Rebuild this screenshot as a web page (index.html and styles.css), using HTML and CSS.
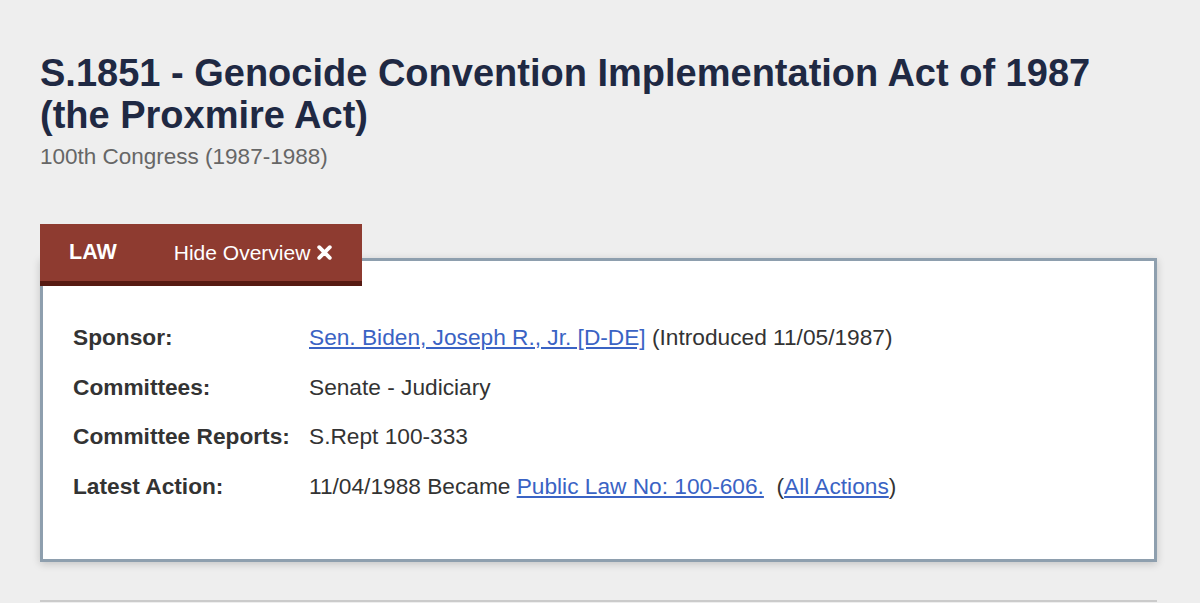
FILE: index.html
```html
<!DOCTYPE html>
<html lang="en">
<head>
<meta charset="utf-8">
<title>S.1851 - Genocide Convention Implementation Act of 1987</title>
<link rel="stylesheet" href="styles.css">
</head>
<body>
<main class="page">
  <header class="bill-header">
    <h1 class="bill-title">S.1851 - Genocide Convention Implementation Act of 1987 (the Proxmire Act)</h1>
    <div class="bill-congress">100th Congress (1987-1988)</div>
  </header>

  <section class="overview">
    <div class="overview-tab">
      <span class="tab-status">LAW</span>
      <span class="tab-toggle">Hide Overview
        <svg class="tab-x" width="15" height="15" viewBox="0 0 15 15" aria-hidden="true">
          <path d="M2.2 2.2 L12.8 12.8 M12.8 2.2 L2.2 12.8" stroke="#ffffff" stroke-width="3.8" stroke-linecap="round" fill="none"/>
        </svg>
      </span>
    </div>
    <div class="overview-panel">
      <dl class="overview-grid">
        <dt>Sponsor:</dt>
        <dd><a href="#">Sen. Biden, Joseph R., Jr. [D-DE]</a> (Introduced 11/05/1987)</dd>
        <dt>Committees:</dt>
        <dd>Senate - Judiciary</dd>
        <dt>Committee Reports:</dt>
        <dd>S.Rept 100-333</dd>
        <dt>Latest Action:</dt>
        <dd>11/04/1988 Became <a href="#">Public Law No: 100-606.</a>&nbsp; (<a href="#">All Actions</a>)</dd>
      </dl>
    </div>
  </section>

  <hr class="divider">
</main>
</body>
</html>
```

FILE: styles.css
```css
html, body {
  margin: 0;
  padding: 0;
  background: #eeeeee;
}

body {
  font-family: "Liberation Sans", Arial, Helvetica, sans-serif;
  color: #333333;
}

.page {
  padding: 52px 43px 0 40px;
  width: 1117px;
}

.bill-title {
  margin: 0;
  font-size: 38px;
  line-height: 42px;
  font-weight: 700;
  color: #1f2943;
}

.bill-congress {
  margin-top: 8px;
  font-size: 22.5px;
  line-height: 26px;
  color: #666666;
}

.overview {
  margin-top: 54px;
  display: flex;
  flex-direction: column;
}

.overview-tab {
  position: relative;
  z-index: 2;
  align-self: flex-start;
  box-sizing: border-box;
  width: 322px;
  display: flex;
  align-items: center;
  gap: 57px;
  height: 62px;
  padding: 0 0 0 29px;
  background: #8e3b30;
  border-bottom: 5px solid #561a12;
  color: #ffffff;
  font-size: 21px;
}

.tab-status {
  font-weight: 700;
  font-size: 21.5px;
}

.tab-toggle {
  display: flex;
  align-items: center;
  gap: 7px;
}

.tab-x {
  display: block;
  margin-top: 0;
}

.overview-panel {
  margin-top: -28px;
  background: #ffffff;
  border: 3px solid #8e9fae;
  box-shadow: 0 2px 8px rgba(0, 0, 0, 0.18);
  padding: 62px 30px 59px 30px;
}

.overview-grid {
  margin: 0;
  display: grid;
  grid-template-columns: 236px 1fr;
  row-gap: 21.5px;
  font-size: 22.7px;
  line-height: 28px;
}

.overview-grid dt {
  font-weight: 700;
  color: #333333;
}

.overview-grid dd {
  margin: 0;
  color: #333333;
}

.overview-grid a {
  color: #3a63c4;
  text-decoration: underline;
}

.divider {
  margin: 38px 0 0 0;
  border: 0;
  border-top: 2px solid #cbcbcb;
}
```
